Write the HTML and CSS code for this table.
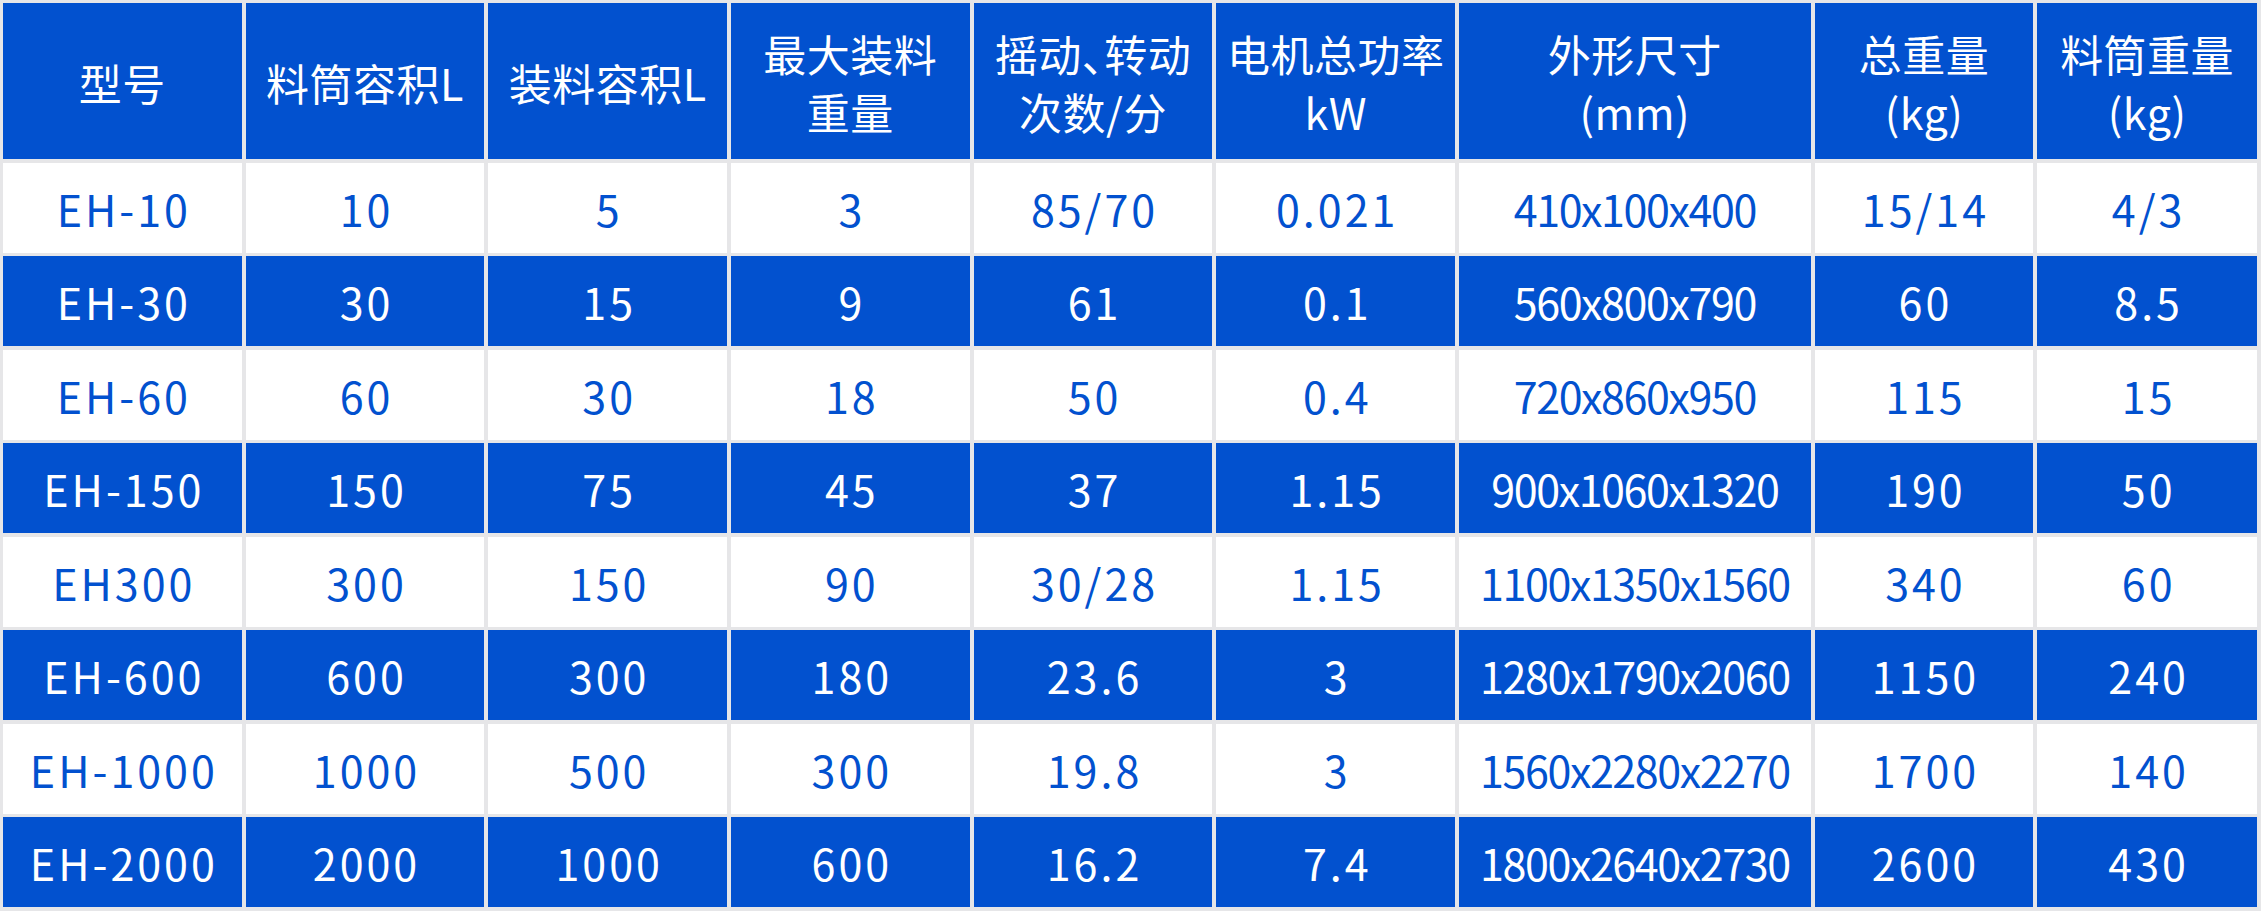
FILE: index.html
```html
<!DOCTYPE html>
<html lang="zh-CN">
<head>
<meta charset="utf-8">
<title>参数表</title>
<link rel="stylesheet" href="styles.css">
</head>
<body>
<div class="table">
  <div class="cell head"><span>型号</span></div>
  <div class="cell head"><span>料筒容积L</span></div>
  <div class="cell head"><span>装料容积L</span></div>
  <div class="cell head"><span>最大装料<br>重量</span></div>
  <div class="cell head"><span>摇动<span class="punct">、</span>转动<br>次数/分</span></div>
  <div class="cell head"><span>电机总功率<br>kW</span></div>
  <div class="cell head"><span>外形尺寸<br>(mm)</span></div>
  <div class="cell head"><span>总重量<br>(kg)</span></div>
  <div class="cell head"><span>料筒重量<br>(kg)</span></div>

  <div class="cell light">EH-10</div><div class="cell light">10</div><div class="cell light">5</div><div class="cell light">3</div><div class="cell light">85/70</div><div class="cell light">0.021</div><div class="cell light dim">410x100x400</div><div class="cell light">15/14</div><div class="cell light">4/3</div>

  <div class="cell dark">EH-30</div><div class="cell dark">30</div><div class="cell dark">15</div><div class="cell dark">9</div><div class="cell dark">61</div><div class="cell dark">0.1</div><div class="cell dark dim">560x800x790</div><div class="cell dark">60</div><div class="cell dark">8.5</div>

  <div class="cell light">EH-60</div><div class="cell light">60</div><div class="cell light">30</div><div class="cell light">18</div><div class="cell light">50</div><div class="cell light">0.4</div><div class="cell light dim">720x860x950</div><div class="cell light">115</div><div class="cell light">15</div>

  <div class="cell dark">EH-150</div><div class="cell dark">150</div><div class="cell dark">75</div><div class="cell dark">45</div><div class="cell dark">37</div><div class="cell dark">1.15</div><div class="cell dark dim">900x1060x1320</div><div class="cell dark">190</div><div class="cell dark">50</div>

  <div class="cell light">EH300</div><div class="cell light">300</div><div class="cell light">150</div><div class="cell light">90</div><div class="cell light">30/28</div><div class="cell light">1.15</div><div class="cell light dim">1100x1350x1560</div><div class="cell light">340</div><div class="cell light">60</div>

  <div class="cell dark">EH-600</div><div class="cell dark">600</div><div class="cell dark">300</div><div class="cell dark">180</div><div class="cell dark">23.6</div><div class="cell dark">3</div><div class="cell dark dim">1280x1790x2060</div><div class="cell dark">1150</div><div class="cell dark">240</div>

  <div class="cell light">EH-1000</div><div class="cell light">1000</div><div class="cell light">500</div><div class="cell light">300</div><div class="cell light">19.8</div><div class="cell light">3</div><div class="cell light dim">1560x2280x2270</div><div class="cell light">1700</div><div class="cell light">140</div>

  <div class="cell dark">EH-2000</div><div class="cell dark">2000</div><div class="cell dark">1000</div><div class="cell dark">600</div><div class="cell dark">16.2</div><div class="cell dark">7.4</div><div class="cell dark dim">1800x2640x2730</div><div class="cell dark">2600</div><div class="cell dark">430</div>
</div>
</body>
</html>
```

FILE: styles.css
```css
html, body {
  margin: 0;
  padding: 0;
  background: #e6e6e8;
}

.table {
  box-sizing: border-box;
  width: 2261px;
  height: 911px;
  padding: 3px 4px 4px 3px;
  display: grid;
  grid-template-columns: repeat(6, minmax(0, 239fr)) minmax(0, 352fr) minmax(0, 219fr) minmax(0, 220fr);
  grid-template-rows: 156px repeat(8, minmax(0, 1fr));
  column-gap: 4px;
  row-gap: 3.5px;
  background: #e6e6e8;
  font-family: "Noto Sans CJK SC", "Noto Sans", sans-serif;
  font-size: 43px;
  font-weight: 400;
}

.cell {
  display: flex;
  align-items: center;
  justify-content: center;
  text-align: center;
  line-height: 58px;
  white-space: nowrap;
  overflow: hidden;
}

.head {
  background: #0251cf;
  color: #ffffff;
  padding-top: 2px;
  letter-spacing: 0.5px;
}

.punct {
  letter-spacing: -0.5em;
  margin-right: 0.02em;
}

.dark {
  background: #0251cf;
  color: #ffffff;
  letter-spacing: 3px;
  padding-left: 3px;
}

.light {
  background: #ffffff;
  color: #0251cf;
  letter-spacing: 3px;
  padding-left: 3px;
}

.dim {
  letter-spacing: -1.4px;
  padding-left: 0;
}
```
